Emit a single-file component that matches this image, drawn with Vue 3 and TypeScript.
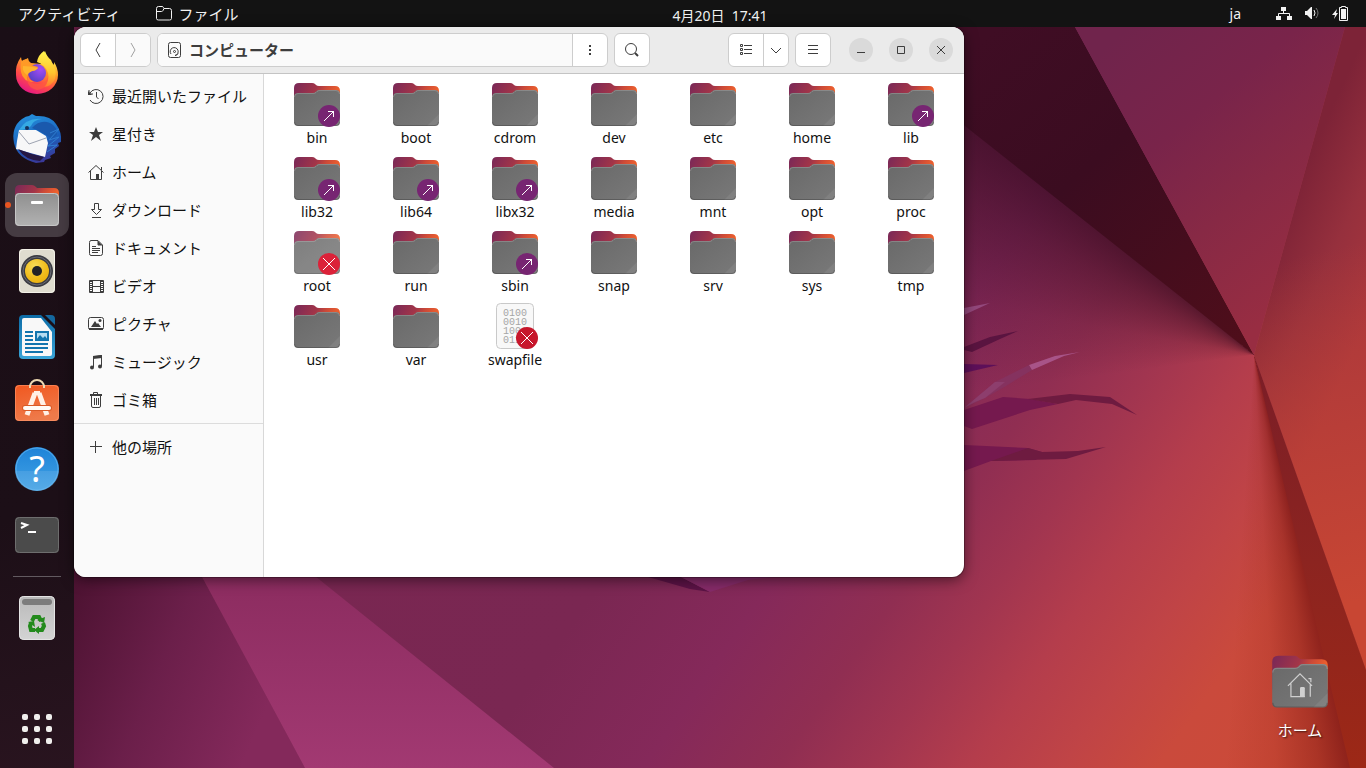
<script setup lang="ts">
interface FileItem {
  name: string
  icon: string
  emblem?: 'link' | 'locked'
  faded?: boolean
}
interface Place {
  label: string
  icon: string
}
interface App {
  label: string
  icon: string
  active?: boolean
}

const folder = (name: string, emblem?: 'link' | 'locked', faded = false): FileItem => ({
  name,
  icon: 'folder',
  emblem,
  faded,
})

const files: FileItem[] = [
  folder('bin', 'link'),
  folder('boot'),
  folder('cdrom'),
  folder('dev'),
  folder('etc'),
  folder('home'),
  folder('lib', 'link'),
  folder('lib32', 'link'),
  folder('lib64', 'link'),
  folder('libx32', 'link'),
  folder('media'),
  folder('mnt'),
  folder('opt'),
  folder('proc'),
  folder('root', 'locked', true),
  folder('run'),
  folder('sbin', 'link'),
  folder('snap'),
  folder('srv'),
  folder('sys'),
  folder('tmp'),
  folder('usr'),
  folder('var'),
  { name: 'swapfile', icon: 'binary', emblem: 'locked' },
]

const places: Place[] = [
  { label: '最近開いたファイル', icon: 'recent' },
  { label: '星付き', icon: 'star' },
  { label: 'ホーム', icon: 'home' },
  { label: 'ダウンロード', icon: 'download' },
  { label: 'ドキュメント', icon: 'document' },
  { label: 'ビデオ', icon: 'video' },
  { label: 'ピクチャ', icon: 'picture' },
  { label: 'ミュージック', icon: 'music' },
  { label: 'ゴミ箱', icon: 'trash' },
]

const apps: App[] = [
  { label: 'Firefox', icon: 'firefox' },
  { label: 'Thunderbird', icon: 'thunderbird' },
  { label: 'ファイル', icon: 'files', active: true },
  { label: 'Rhythmbox', icon: 'rhythmbox' },
  { label: 'LibreOffice Writer', icon: 'writer' },
  { label: 'Ubuntu Software', icon: 'software' },
  { label: 'ヘルプ', icon: 'help' },
  { label: '端末', icon: 'terminal' },
]
</script>

<template>
  <div class="desktop">
    <svg class="wallpaper" viewBox="0 0 1366 768" preserveAspectRatio="none" aria-hidden="true">
      <defs>
        <linearGradient id="w-dark" gradientUnits="userSpaceOnUse" x1="980" y1="40" x2="1254" y2="355">
          <stop offset="0" stop-color="#3f0d24" />
          <stop offset="0.4" stop-color="#3b0c20" />
          <stop offset="1" stop-color="#500e1a" />
        </linearGradient>
        <linearGradient id="w-top" gradientUnits="userSpaceOnUse" x1="1090" y1="60" x2="1290" y2="300">
          <stop offset="0" stop-color="#70244c" />
          <stop offset="0.35" stop-color="#79244a" />
          <stop offset="0.65" stop-color="#872945" />
          <stop offset="1" stop-color="#982d42" />
        </linearGradient>
        <linearGradient id="w-right" gradientUnits="userSpaceOnUse" x1="1290" y1="200" x2="1400" y2="250">
          <stop offset="0" stop-color="#7d2337" />
          <stop offset="0.5" stop-color="#96303d" />
          <stop offset="1" stop-color="#a8363d" />
        </linearGradient>
        <linearGradient id="w-glow" gradientUnits="userSpaceOnUse" x1="1280" y1="220" x2="1366" y2="600">
          <stop offset="0.1" stop-color="#c84633" stop-opacity="0" />
          <stop offset="1" stop-color="#c84633" />
        </linearGradient>
        <linearGradient id="w-strip" x1="0" y1="0" x2="0" y2="1">
          <stop offset="0" stop-color="#7a1d27" />
          <stop offset="0.5" stop-color="#8c2420" />
          <stop offset="1" stop-color="#9d2816" />
        </linearGradient>
        <linearGradient id="w-left" gradientUnits="userSpaceOnUse" x1="60" y1="610" x2="270" y2="700">
          <stop offset="0" stop-color="#4c1231" />
          <stop offset="0.5" stop-color="#6b1f4a" />
          <stop offset="1" stop-color="#84295b" />
        </linearGradient>
        <linearGradient id="w-beam" x1="0" y1="0" x2="0" y2="1">
          <stop offset="0" stop-color="#8a2b5e" />
          <stop offset="1" stop-color="#a23972" />
        </linearGradient>
        <linearGradient id="folder-back" x1="0" y1="0" x2="1" y2="0.3">
          <stop offset="0" stop-color="#782858" />
          <stop offset="0.5" stop-color="#a33548" />
          <stop offset="0.7" stop-color="#cc4a38" />
          <stop offset="1" stop-color="#f2632c" />
        </linearGradient>
        <linearGradient id="folder-front" x1="0" y1="0" x2="1" y2="1">
          <stop offset="0" stop-color="#696969" />
          <stop offset="1" stop-color="#797979" />
        </linearGradient>
        <linearGradient id="silver" x1="0" y1="0" x2="0" y2="1">
          <stop offset="0" stop-color="#8f8f8f" />
          <stop offset="1" stop-color="#b2b2b2" />
        </linearGradient>
        <linearGradient id="fox" x1="0.8" y1="0" x2="0.3" y2="1">
          <stop offset="0.1" stop-color="#fff14a" />
          <stop offset="0.4" stop-color="#ff9a26" />
          <stop offset="0.7" stop-color="#ff4a48" />
          <stop offset="1" stop-color="#e31587" />
        </linearGradient>
        <linearGradient id="flame" x1="0.5" y1="0" x2="0.5" y2="1">
          <stop offset="0" stop-color="#fff44f" />
          <stop offset="0.6" stop-color="#ffc62e" />
          <stop offset="1" stop-color="#ff7b2e" />
        </linearGradient>
        <radialGradient id="globe" cx="0.7" cy="0.3" r="0.8">
          <stop offset="0" stop-color="#a44cf5" />
          <stop offset="1" stop-color="#5440c4" />
        </radialGradient>
        <linearGradient id="bird" x1="0.3" y1="0" x2="0.6" y2="1">
          <stop offset="0" stop-color="#2590dc" />
          <stop offset="0.55" stop-color="#1b62bd" />
          <stop offset="1" stop-color="#3b3596" />
        </linearGradient>
        <linearGradient id="orange" x1="0" y1="0" x2="0.3" y2="1">
          <stop offset="0" stop-color="#f1571f" />
          <stop offset="1" stop-color="#ee7a4a" />
        </linearGradient>
        <linearGradient id="blue" x1="0" y1="0" x2="0" y2="1">
          <stop offset="0" stop-color="#1d83d8" />
          <stop offset="1" stop-color="#44a3e5" />
        </linearGradient>
        <linearGradient id="sheet" x1="0" y1="0" x2="0" y2="1">
          <stop offset="0" stop-color="#0c6ba6" />
          <stop offset="1" stop-color="#39a5d8" />
        </linearGradient>
        <radialGradient id="cone" cx="0.4" cy="0.3" r="0.8">
          <stop offset="0" stop-color="#f8dc58" />
          <stop offset="0.6" stop-color="#f0bd1d" />
          <stop offset="1" stop-color="#e8ad0c" />
        </radialGradient>
        <linearGradient id="bin" x1="0" y1="0" x2="0" y2="1">
          <stop offset="0" stop-color="#b9b9b9" />
          <stop offset="1" stop-color="#d4d4d4" />
        </linearGradient>

        <symbol id="folder" viewBox="0 0 48 48">
          <path d="M1 8q0-5 5-5h13q2 0 3 1l1 1q1 1 3 1h16q5 0 5 5v20H1z" fill="url(#folder-back)" />
          <path
            d="M1 17q0-4 4-4h15q1.500 0 2.500-1l1-1q1-1 2.500-1h17q4 0 4 4v28q0 4-4 4H5q-4 0-4-4z"
            fill="url(#folder-front)"
          />
          <path d="M47 34v8q0 4-4 4h-8z" fill="#fff" opacity="0.070" />
          <path
            d="M1.500 17q0-3.500 3.500-3.500h15q2 0 3-1l1-1q1-1 2.500-1H43q3.500 0 3.500 3.500"
            fill="none"
            stroke="#fff"
            stroke-opacity="0.180"
          />
          <path d="M1.500 42q0 3.500 3.500 3.500h38q3.500 0 3.500-3.500" fill="none" stroke="#000" stroke-opacity="0.200" />
        </symbol>
      </defs>

      <polygon points="74,560 193,560 305,768 74,768" fill="url(#w-left)" />
      <polygon points="193,560 295,560 554,768 305,768" fill="url(#w-beam)" />
      <polygon points="840,27 1075,27 1254,355" fill="url(#w-dark)" />
      <polygon points="1075,27 1345,27 1254,355" fill="url(#w-top)" />
      <polygon points="1345,27 1366,27 1366,670 1254,355" fill="url(#w-right)" />
      <polygon points="1345,27 1366,27 1366,670 1254,355" fill="url(#w-glow)" />
      <polygon points="1254,355 1366,670 1366,768 1350,768 1322,650" fill="url(#w-strip)" />

      <polygon points="648,577 681,577 710,592 690,589" fill="#5c1346" />
      <polygon points="681,577 774,577 748,580 710,592" fill="#862b69" />
      <polygon points="964,308 990,303 964,315" fill="#93487c" />
      <polygon points="964,347 990,337 1018,331 1000,339 972,352 964,350" fill="#5a1440" />
      <polygon points="964,364 998,365 964,373" fill="#5d1059" />
      <polygon points="964,408 995,382 1029,365 1032,370 1006,386 985,398" fill="#85325f" />
      <polygon points="964,408 975,402 985,398 1005,382 995,382" fill="#8d3e6d" />
      <polygon points="1029,365 1055,356 1080,352 1064,356 1032,370" fill="#a85488" />
      <polygon points="964,410 1003,397 1030,399 1058,404 1030,410 972,429 964,426" fill="#75194e" />
      <polygon points="1028,399 1070,394 1110,397 1137,415 1112,404 1076,400 1058,404" fill="#6e1b40" />
      <polygon points="964,445 1028,448 1042,452 1036,460 991,461 964,471" fill="#75194e" />
      <polygon points="1028,448 1042,452 1078,451 1106,447 1066,459 991,461" fill="#6e1b40" />
    </svg>

    <header class="topbar">
      <div class="topbar-left">
        <button type="button" class="top-button">アクティビティ</button>
        <button type="button" class="top-button">
          <svg width="16" height="16" viewBox="0 0 16 16" fill="none" stroke="#f2f2f2" aria-hidden="true">
            <path d="M.5 2.500q0-2 2-2H6q1 0 1.500 1l.5 1h5.500q2 0 2 2v8q0 1.500-2 1.500h-11q-2 0-2-1.500z" />
            <path d="M.5 5.500h5q1 0 1.500-1l1-2" />
          </svg>
          ファイル
        </button>
      </div>
      <button type="button" class="top-button clock">4月20日&nbsp; 17:41</button>
      <div class="topbar-right">
        <button type="button" class="top-button">ja</button>
        <button type="button" class="top-button indicators" aria-label="システム">
          <svg width="16" height="16" viewBox="0 0 16 16" fill="#f2f2f2" aria-hidden="true">
            <path d="M5 1h5v4H8v2h5q1 0 1 1v2h2v4h-5v-4h2V8H3v2h2v4H0v-4h2V8q0-1 1-1h4V5H5z" />
          </svg>
          <svg width="16" height="16" viewBox="0 0 16 16" aria-hidden="true">
            <path d="M1 5h2l4-4h1v12H7L3 9H1z" fill="#f2f2f2" />
            <path d="M10 4q2 3 0 6" fill="none" stroke="#f2f2f2" />
            <path d="M12 2q4 5 0 10" fill="none" stroke="#777" />
          </svg>
          <svg width="18" height="16" viewBox="0 0 18 16" aria-hidden="true">
            <path d="M5 3 0 9h3l-1 4 4-6H4z" fill="#f2f2f2" />
            <path d="M9.500.500h4v1h2v13h-8v-13h2z" fill="none" stroke="#f2f2f2" />
            <rect x="9" y="3" width="5" height="10" fill="#f2f2f2" />
          </svg>
        </button>
      </div>
    </header>

    <nav class="dock" aria-label="ドック">
      <button
        v-for="app in apps"
        :key="app.icon"
        type="button"
        class="tile"
        :class="{ active: app.active }"
        :aria-label="app.label"
      >
        <svg width="64" height="64" viewBox="0 0 64 64" aria-hidden="true">
          <template v-if="app.icon === 'firefox'">
            <path
              d="M11 34Q10 24 16 16q0 3 2 5 2-3 5-4 0 3 3 5l10 1q0-8 4-13 2 6 6 9 1 3 3 5 0-2 0-3 4 6 4 13a21 19 0 0 1-42 0z"
              fill="url(#fox)"
            />
            <path d="M32 21q1-7 7-11 1 6 6 10 8 8 5 18-3 7-11 8 6-7 4-14-2-8-11-11z" fill="url(#flame)" />
            <circle cx="32" cy="32" r="9" fill="url(#globe)" />
            <path
              d="M16 21q2-3 7-3 0 4 3 6l7 2q-1 3-6 4-4 1-4 4 0 5 6 7-11 0-13-10-1-5 0-10z"
              fill="#ff9a26"
            />
            <path d="M18 25q6 0 15 2-2 3-6 3-4 2-5 4-5-3-4-9z" fill="#ffb42e" />
            <path d="M22 34q2 9 11 9 8 0 10-7 0 12-11 13-11-2-10-15z" fill="#ff5a3e" opacity="0.700" />
          </template>
          <template v-else-if="app.icon === 'thunderbird'">
            <path
              d="M9 36Q6 20 17 12q4-3 7-3l3-2 4 2q14-1 20 8 6 8 5 18l-3 1 1 3-4 3v4l-5 3 1 2-6 2-1 2-8 1Q12 51 9 36z"
              fill="url(#bird)"
            />
            <path d="M27 21q8-9 18-5 8 4 7 12l-5 4-6-4q-6-4-14-7z" fill="#1a59ad" />
            <path d="M14 23q8-13 23-11-9 1-11 7-4 4-12 4z" fill="#35a9e4" />
            <path d="M14 23 31 23 41 29 43 36 40 50 11 42 12 34z" fill="#f7f7f8" />
            <path d="M14 25 24 37 41 31" fill="none" stroke="#9da3b1" />
            <path d="M13 42q12 5 26 8l-4 4Q20 53 13 42z" fill="#251744" />
            <circle cx="22" cy="21" r="2" fill="#14325e" />
            <path d="M45 26 54 22 44 33 54 30 43 39 52 38 42 45" fill="none" stroke="#2f7ed0" />
          </template>
          <template v-else-if="app.icon === 'files'">
            <path d="M10 17q0-5 5-5h12q2 0 4 2l1 1h17q5 0 5 5v10H10z" fill="url(#folder-back)" />
            <rect x="10" y="20" width="44" height="33" rx="4" fill="url(#silver)" />
            <rect x="10.500" y="20.500" width="43" height="32" rx="4" fill="none" stroke="#c6c6c6" />
            <rect x="26" y="28" width="12" height="3" rx="1" fill="#fff" />
          </template>
          <template v-else-if="app.icon === 'rhythmbox'">
            <rect x="14" y="10" width="36" height="44" rx="4" fill="#dfdccf" />
            <rect x="14.500" y="10.500" width="35" height="43" rx="4" fill="none" stroke="#f3f1e8" />
            <circle cx="32" cy="32" r="16" fill="#3a3b42" />
            <circle cx="32" cy="32" r="14" fill="none" stroke="#6b6c75" />
            <circle cx="32" cy="32" r="12" fill="url(#cone)" />
            <circle cx="32" cy="32" r="5" fill="#222226" />
          </template>
          <template v-else-if="app.icon === 'writer'">
            <path d="M18 10h18l14 14v26q0 4-4 4H18q-4 0-4-4V14q0-4 4-4z" fill="url(#sheet)" />
            <path d="M40 10h6q4 0 4 4v6z" fill="#14689f" />
            <path d="M19 13h17l11 14v22q0 2-2 2H19q-2 0-2-2V15q0-2 2-2z" fill="#f8f8f8" />
            <path d="M20 27h8M20 31h8M20 35h8M20 39h23M20 43h23M20 47h18" stroke="#1275ae" stroke-width="2" />
            <rect x="31" y="27" width="12" height="8" fill="#b4dcf1" stroke="#1275ae" stroke-width="2" />
            <path d="m31 35 4-5 3 3 2-2 3 4z" fill="#1275ae" />
          </template>
          <template v-else-if="app.icon === 'software'">
            <path d="M25 17v-1a7 7 0 0 1 14 0v1" fill="none" stroke="#eed9b2" stroke-width="2" />
            <rect x="10" y="14" width="44" height="36" rx="4" fill="url(#orange)" />
            <rect x="10.500" y="14.500" width="43" height="35" rx="4" fill="none" stroke="#ff986e" stroke-opacity="0.600" />
            <path d="M25 14v3M39 14v3" stroke="#eed9b2" stroke-width="2" />
            <path d="M22 44 30 22M42 44 34 22" fill="none" stroke="#fff0e6" stroke-width="5" />
            <path d="M29 20h6v4h-6z" fill="#fff0e6" />
            <path d="M20 37h24" stroke="#d85a27" stroke-width="6" stroke-linecap="round" />
            <path d="M20 37h24" stroke="#fffaf6" stroke-width="4" stroke-linecap="round" />
          </template>
          <template v-else-if="app.icon === 'help'">
            <circle cx="32" cy="32" r="22" fill="url(#blue)" />
            <path d="M10 34h44a22 20 0 0 1-44 0z" fill="#fff" opacity="0.100" />
            <circle cx="32" cy="32" r="21" fill="none" stroke="#69b8ef" stroke-opacity="0.700" />
            <text x="32" y="45" text-anchor="middle" class="help-mark">?</text>
          </template>
          <template v-else>
            <rect x="10" y="14" width="44" height="36" rx="4" fill="#4b4b4b" />
            <rect x="10.500" y="14.500" width="43" height="35" rx="4" fill="none" stroke="#6e6e6e" />
            <path d="m16 20 6 2-6 3M23 29h8" fill="none" stroke="#fff" stroke-width="2" />
          </template>
        </svg>
      </button>

      <hr class="dock-rule" />

      <button type="button" class="tile" aria-label="ゴミ箱">
        <svg width="64" height="64" viewBox="0 0 64 64" aria-hidden="true">
          <rect x="14" y="10" width="36" height="44" rx="5" fill="url(#bin)" />
          <rect x="14.500" y="10.500" width="35" height="43" rx="4" fill="none" stroke="#e4e4e4" />
          <rect x="17" y="13" width="30" height="6" rx="3" fill="#7c7c7c" />
          <g fill="none" stroke="#238a1c" stroke-width="4">
            <path d="m27 35 2-4h5l2 4" />
            <path d="m38 37 1 3-2 4h-3" />
            <path d="M30 44h-4l-1-4 1-3" />
          </g>
          <path d="m39 37 1-6-8 3zM34 40v8l-5-4zM23 36l6-1 1 6z" fill="#238a1c" />
        </svg>
      </button>

      <button type="button" class="tile launcher" aria-label="アプリケーションを表示する">
        <span v-for="n in 9" :key="n" class="dot"></span>
      </button>
    </nav>

    <main class="workspace">
      <section class="window" aria-label="コンピューター">
        <div class="headerbar">
          <div class="group">
            <button type="button" class="tool" aria-label="戻る">
              <svg width="16" height="16" viewBox="0 0 16 16" class="line"><path d="M10 1 6 8l4 7" /></svg>
            </button>
            <button type="button" class="tool disabled" aria-label="進む" disabled>
              <svg width="16" height="16" viewBox="0 0 16 16" class="line"><path d="m6 1 4 7-4 7" /></svg>
            </button>
          </div>
          <div class="group path">
            <button type="button" class="location">
              <svg width="14" height="16" viewBox="0 0 14 16" class="line" aria-hidden="true">
                <rect x="0.500" y="0.500" width="12" height="15" rx="2" />
                <circle cx="6.500" cy="9.500" r="1" />
                <path d="M3 12a4 4 0 1 1 4 1.500q2 0 3-2" />
              </svg>
              コンピューター
            </button>
            <button type="button" class="tool" aria-label="場所のメニュー">
              <svg width="16" height="16" viewBox="0 0 16 16" fill="#3d3d3d">
                <path d="M7 3h2v2H7zM7 7h2v2H7zM7 11h2v2H7z" />
              </svg>
            </button>
          </div>
          <div class="group">
            <button type="button" class="tool" aria-label="検索">
              <svg width="16" height="16" viewBox="0 0 16 16" class="line">
                <circle cx="7" cy="7" r="5.500" />
                <path d="m11 11 3 3" stroke-width="2" />
              </svg>
            </button>
          </div>
          <div class="group view">
            <button type="button" class="tool" aria-label="リスト表示">
              <svg width="16" height="16" viewBox="0 0 16 16" class="line">
                <path d="M2.500 2.500h2v2h-2zM2.500 6.500h2v2h-2zM2.500 10.500h2v2h-2zM6 3.500h8M6 7.500h8M6 11.500h8" />
              </svg>
            </button>
            <button type="button" class="tool narrow" aria-label="表示オプション">
              <svg width="16" height="16" viewBox="0 0 16 16" class="line"><path d="m3 6 5 5 5-5" /></svg>
            </button>
          </div>
          <div class="group">
            <button type="button" class="tool" aria-label="メニュー">
              <svg width="16" height="16" viewBox="0 0 16 16" class="line">
                <path d="M3 3.500h10M3 7.500h10M3 11.500h10" />
              </svg>
            </button>
          </div>
          <div class="controls">
            <button type="button" class="control" aria-label="最小化">
              <svg width="16" height="16" viewBox="0 0 16 16" class="line"><path d="M4 10.500h8" /></svg>
            </button>
            <button type="button" class="control" aria-label="最大化">
              <svg width="16" height="16" viewBox="0 0 16 16" class="line"><path d="M4.500 4.500h7v7h-7z" /></svg>
            </button>
            <button type="button" class="control" aria-label="閉じる">
              <svg width="16" height="16" viewBox="0 0 16 16" class="line"><path d="m4 4 8 8M12 4l-8 8" /></svg>
            </button>
          </div>
        </div>

        <div class="body">
          <nav class="sidebar" aria-label="場所">
            <a v-for="place in places" :key="place.icon" href="#" class="place">
              <svg width="16" height="16" viewBox="0 0 16 16" class="line" aria-hidden="true">
                <template v-if="place.icon === 'recent'">
                  <path d="M2 5a7 7 0 1 1 0 7M1 2v4h4M8.500 4v5l2 2" />
                  <path d="M0 3v4h4z" fill="#3d3d3d" stroke="none" />
                </template>
                <path
                  v-else-if="place.icon === 'star'"
                  d="m8 1 2 5h5l-4 3 2 6-5-4-5 4 2-6-4-3h5z"
                  fill="#3d3d3d"
                  stroke="none"
                />
                <template v-else-if="place.icon === 'home'">
                  <path d="m.5 8.500 7.500-7 7.500 7M2.500 7v8.500h11V7M13.500 3v3" />
                  <path d="M8 10h3v6H8z" fill="#3d3d3d" stroke="none" />
                </template>
                <path
                  v-else-if="place.icon === 'download'"
                  d="M6.500 1.500h4v6h3l-5 5-5-5h3zM4 15.500h9"
                />
                <template v-else-if="place.icon === 'document'">
                  <path d="M3 .5h7l4.500 4.500v8.500q0 2-2 2H3q-1.500 0-1.500-2v-11q0-2 1.500-2z" />
                  <path d="M10 1v4h4M4 6.500h4M4 8.500h8M4 10.500h8M4 12.500h6" />
                  <path d="M10 1v4h4z" fill="#3d3d3d" stroke="none" />
                </template>
                <template v-else-if="place.icon === 'video'">
                  <path d="M1.500 2.500h14v12h-14zM4.500 2v13M12.500 2v13M4 8.500h8" />
                  <path d="M3 3v12M14 3v12" stroke-width="2" stroke-dasharray="1 1" />
                </template>
                <template v-else-if="place.icon === 'picture'">
                  <rect x="0.500" y="1.500" width="15" height="12" rx="2" />
                  <path d="M3 11 7 5l2 3 1-1 3 4z" fill="#3d3d3d" stroke="none" />
                  <circle cx="12" cy="4.500" r="1.500" fill="#3d3d3d" stroke="none" />
                  <path d="M1 13h14" stroke-width="2" />
                </template>
                <template v-else-if="place.icon === 'music'">
                  <path d="M5.500 13V3.500l8-2V12" />
                  <path d="M5 2q5-1 9-1v3L5 5z" fill="#3d3d3d" stroke="none" />
                  <ellipse cx="4" cy="13.500" rx="2" ry="2" fill="#3d3d3d" stroke="none" />
                  <ellipse cx="12" cy="12.500" rx="2" ry="2" fill="#3d3d3d" stroke="none" />
                </template>
                <template v-else>
                  <path d="M3.500 4v10q0 1.500 1.500 1.500h6q1.500 0 1.500-1.500V4M6.500 6v7M8.500 6v7M10.500 6v7M5.500 2V.5h4V2" />
                  <path d="M2 3h12" stroke-width="2" />
                </template>
              </svg>
              {{ place.label }}
            </a>
            <hr class="side-rule" />
            <a href="#" class="place">
              <svg width="16" height="16" viewBox="0 0 16 16" class="line" aria-hidden="true">
                <path d="M2 7.500h12M7.500 2v12" />
              </svg>
              他の場所
            </a>
          </nav>

          <div class="files">
            <button v-for="file in files" :key="file.name" type="button" class="file">
              <svg width="48" height="48" viewBox="0 0 48 48" aria-hidden="true">
                <use v-if="file.icon === 'folder'" href="#folder" width="48" height="48" :opacity="file.faded ? 0.85 : 1" />
                <template v-else>
                  <rect x="5.500" y="1.500" width="37" height="45" rx="4" fill="#f8f8f8" stroke="#c9c9c9" />
                  <text class="bits" x="12" y="14">0100</text>
                  <text class="bits" x="12" y="23">0010</text>
                  <text class="bits" x="12" y="32">1001</text>
                  <text class="bits" x="12" y="41">0110</text>
                </template>
                <template v-if="file.emblem === 'link'">
                  <circle cx="36" cy="36" r="11" fill="#772572" />
                  <path d="m31 41 10-10M35 31.500h5.500V37" fill="none" stroke="#fff" />
                </template>
                <template v-else-if="file.emblem === 'locked'">
                  <circle cx="36" cy="36" r="11" :fill="file.faded ? '#db2239' : '#c7162b'" />
                  <path d="m30 30 12 12M42 30 30 42" fill="none" stroke="#fff" />
                </template>
              </svg>
              <span class="file-name">{{ file.name }}</span>
            </button>
          </div>
        </div>
      </section>

      <button type="button" class="shortcut">
        <svg width="58" height="58" viewBox="0 0 48 48" aria-hidden="true">
          <use href="#folder" width="48" height="48" />
          <g fill="none" stroke="#d0d0d0">
            <path d="m14 28 10-10 10 10M16.500 26v11H28M32.500 26v11M31 22h2v3" />
            <path d="M24 30q0-1 1-1h2q1 0 1 1v7h-4z" fill="#d0d0d0" stroke="none" />
          </g>
        </svg>
        <span>ホーム</span>
      </button>
    </main>
  </div>
</template>

<style>
body {
  margin: 0;
  overflow: hidden;
}
</style>

<style scoped>
.desktop {
  position: relative;
  display: grid;
  grid-template: 27px minmax(0, 1fr) / 74px minmax(0, 1fr);
  height: 100vh;
  background:
    conic-gradient(
      at 91.8% 46.2%,
      transparent 0 166deg,
      rgb(120 20 18 / 0.8) 166deg,
      rgb(130 25 18 / 0.45) 171deg,
      rgb(140 30 18 / 0.15) 177deg,
      transparent 184deg 262deg,
      rgb(42 5 24 / 0.15) 280deg,
      rgb(42 5 24 / 0.42) 298deg,
      rgb(42 5 24 / 0.62) 309deg,
      transparent 309deg
    ),
    linear-gradient(
      125deg,
      #762650 0%,
      #7a2752 53%,
      #85295a 62%,
      #902e52 69%,
      #a13550 74%,
      #b43d4c 79%,
      #c04446 84%,
      #ca4a3c 89%,
      #cc4a34 100%
    );
  font-family: "Noto Sans", "Noto Sans CJK JP", sans-serif;
  font-size: 15px;
  line-height: 20px;
  color: #111;
}
.wallpaper {
  position: absolute;
  inset: 0;
  width: 100%;
  height: 100%;
}
button {
  margin: 0;
  padding: 0;
  border: 0;
  background: none;
  font: inherit;
  color: inherit;
}
svg {
  display: block;
  flex: none;
}
.line {
  fill: none;
  stroke: #3d3d3d;
}

.topbar {
  position: relative;
  grid-column: 1 / -1;
  display: grid;
  grid-template-columns: 74px 1fr auto 1fr;
  align-items: center;
  background: #131313;
  color: #f2f2f2;
}
.topbar-left {
  grid-column: 1 / 3;
  display: flex;
  gap: 36px;
  padding-left: 18px;
}
.top-button {
  display: flex;
  align-items: center;
  gap: 6px;
  white-space: nowrap;
}
.topbar-left .top-button {
  font-family: "Noto Sans CJK JP", sans-serif;
}
.clock {
  padding-top: 4px;
  font-size: 14px;
}
.topbar-right {
  display: flex;
  justify-content: flex-end;
  gap: 35px;
  padding-right: 16px;
  font-size: 14px;
}
.indicators {
  gap: 12px;
}

.dock {
  position: relative;
  display: flex;
  flex-direction: column;
  align-items: center;
  gap: 2px;
  padding: 14px 0 7px;
  background: linear-gradient(165deg, #1a0e16 0%, #1c0f17 65%, #29141f 100%);
}
.tile {
  position: relative;
  width: 64px;
  height: 64px;
  border-radius: 12px;
}
.tile.active {
  background: #453b42;
}
.tile.active::before {
  content: "";
  position: absolute;
  left: 0;
  top: 29px;
  width: 6px;
  height: 6px;
  border-radius: 50%;
  background: #e95420;
}
.help-mark {
  fill: #fff;
  font: 36px "Noto Sans", sans-serif;
}
.dock-rule {
  width: 48px;
  height: 1px;
  margin: 7px 0;
  border: 0;
  background: #625a60;
}
.launcher {
  display: grid;
  grid-template-columns: repeat(3, 6px);
  grid-auto-rows: 6px;
  gap: 6px;
  place-content: center;
  margin-top: auto;
}
.dot {
  border-radius: 2px;
  background: #f0efed;
}

.workspace {
  position: relative;
  display: grid;
  grid-template: minmax(0, 1fr) 191px / minmax(0, 1fr) 402px;
}
.window {
  display: flex;
  flex-direction: column;
  overflow: hidden;
  border-radius: 12px;
  background: #fff;
  box-shadow: 0 0 0 1px rgb(0 0 0 / 0.25), 0 3px 14px rgb(0 0 0 / 0.5);
}
.headerbar {
  display: flex;
  align-items: center;
  gap: 6px;
  padding: 6px 11px 6px 6px;
  border-bottom: 1px solid #c4c4c4;
  background: #ebebeb;
}
.group {
  display: flex;
  box-sizing: border-box;
  height: 34px;
  border: 1px solid #cdcdcd;
  border-radius: 6px;
  background: #fff;
  overflow: hidden;
}
.path {
  flex: 0 1 451px;
}
.tool {
  display: grid;
  place-items: center;
  width: 34px;
}
.tool + .tool,
.location + .tool {
  border-left: 1px solid #cdcdcd;
  width: 35px;
}
.tool + .tool.narrow {
  width: 25px;
}
.disabled {
  background: #fafafa;
}
.disabled .line {
  stroke: #a0a0a0;
}
.location {
  flex: 1;
  display: flex;
  align-items: center;
  gap: 7px;
  padding-left: 10px;
  background: #fafafa;
  color: #3d3d3d;
  font-weight: 700;
  font-family: "Noto Sans CJK JP", sans-serif;
  white-space: nowrap;
}
.view {
  margin-left: auto;
}
.controls {
  display: flex;
  gap: 16px;
  margin-left: 12px;
}
.control {
  display: grid;
  place-items: center;
  width: 24px;
  height: 24px;
  border-radius: 50%;
  background: #dadada;
}

.body {
  flex: 1;
  display: flex;
  min-height: 0;
}
.sidebar {
  flex: none;
  box-sizing: border-box;
  width: 190px;
  padding-top: 3px;
  border-right: 1px solid #d8d8d8;
  background: #fafafa;
  font-family: "Noto Sans CJK JP", sans-serif;
}
.place {
  display: flex;
  align-items: center;
  gap: 8px;
  height: 38px;
  padding-left: 14px;
  color: #111;
  text-decoration: none;
  white-space: nowrap;
}
.side-rule {
  height: 1px;
  margin: 4px 0;
  border: 0;
  background: #dcdcdc;
}
.files {
  flex: 1;
  display: grid;
  grid-template-columns: repeat(auto-fill, 99px);
  justify-content: center;
  align-content: start;
  gap: 6px 0;
  padding-top: 6px;
}
.file {
  display: flex;
  flex-direction: column;
  align-items: center;
  font-size: 14px;
}
.bits {
  fill: #a6a6a6;
  font: 10px "Liberation Mono", monospace;
}

.shortcut {
  grid-area: 2 / 2;
  justify-self: end;
  align-self: end;
  display: flex;
  flex-direction: column;
  align-items: center;
  gap: 10px;
  padding: 0 37px 28px 0;
  color: #fff;
  font-family: "Noto Sans CJK JP", sans-serif;
  text-shadow: 1px 1px 2px rgb(0 0 0 / 0.7);
}
</style>
